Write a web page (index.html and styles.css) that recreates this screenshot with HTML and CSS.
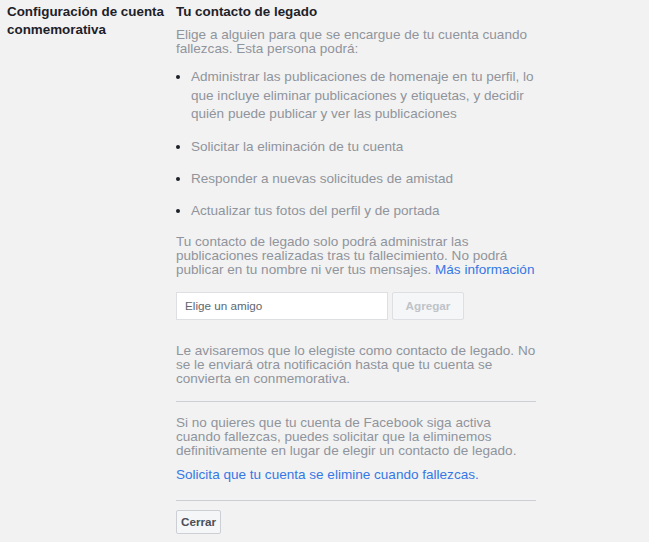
FILE: index.html
```html
<!DOCTYPE html>
<html lang="es">
<head>
    <meta charset="UTF-8">
    <meta name="viewport" content="width=device-width, initial-scale=1.0">
    <title>Configuración de cuenta conmemorativa</title>
    <link rel="stylesheet" href="styles.css">
</head>
<body>
    <div class="settings-row">
        <h2 class="row-label">Configuración de cuenta conmemorativa</h2>

        <div class="row-content">
            <h3 class="section-title">Tu contacto de legado</h3>
            <p class="muted intro">Elige a alguien para que se encargue de tu cuenta cuando fallezcas. Esta persona podrá:</p>

            <ul class="abilities">
                <li><span>Administrar las publicaciones de homenaje en tu perfil, lo que incluye eliminar publicaciones y etiquetas, y decidir quién puede publicar y ver las publicaciones</span></li>
                <li><span>Solicitar la eliminación de tu cuenta</span></li>
                <li><span>Responder a nuevas solicitudes de amistad</span></li>
                <li><span>Actualizar tus fotos del perfil y de portada</span></li>
            </ul>

            <p class="muted limits">Tu contacto de legado solo podrá administrar las publicaciones realizadas tras tu fallecimiento. No podrá publicar en tu nombre ni ver tus mensajes. <a href="#" class="link">Más información</a></p>

            <div class="friend-picker">
                <input type="text" class="friend-input" placeholder="Elige un amigo">
                <button class="btn btn-disabled" disabled>Agregar</button>
            </div>

            <p class="muted notice">Le avisaremos que lo elegiste como contacto de legado. No se le enviará otra notificación hasta que tu cuenta se convierta en conmemorativa.</p>

            <div class="divider"></div>

            <p class="muted delete-info">Si no quieres que tu cuenta de Facebook siga activa cuando fallezcas, puedes solicitar que la eliminemos definitivamente en lugar de elegir un contacto de legado.</p>
            <p class="delete-link"><a href="#" class="link">Solicita que tu cuenta se elimine cuando fallezcas.</a></p>

            <div class="divider"></div>

            <button class="btn btn-close">Cerrar</button>
        </div>
    </div>
</body>
</html>
```

FILE: styles.css
```css
* {
    box-sizing: border-box;
    margin: 0;
    padding: 0;
}

body {
    background: #f2f2f2;
    font-family: "Liberation Sans", Arial, sans-serif;
    font-size: 13.55px;
    color: #1d2129;
}

.settings-row {
    display: flex;
    padding: 3px 0 0 7px;
}

.row-label {
    width: 169px;
    font-size: 13.4px;
    line-height: 18px;
    font-weight: bold;
}

.row-content {
    width: 360px;
}

.section-title {
    font-size: 13.4px;
    line-height: 18px;
    font-weight: bold;
}

.muted {
    color: #90949c;
    line-height: 14px;
}

.intro {
    margin-top: 7px;
}

.abilities {
    margin-top: 12px;
    padding-left: 15px;
    line-height: 18.6px;
}

.abilities li {
    color: #1d2129;
    margin-bottom: 13.8px;
}

.abilities li span {
    color: #90949c;
}

.limits {
    margin-top: 3px;
}

.link {
    color: #3578e5;
    text-decoration: none;
}

.friend-picker {
    display: flex;
    gap: 4px;
    margin-top: 15px;
}

.friend-input {
    width: 212px;
    height: 28px;
    padding: 0 8px;
    background: #fff;
    border: 1px solid #dddfe2;
    font-family: inherit;
    font-size: 11.7px;
    color: #1d2129;
    outline: none;
}

.friend-input::placeholder {
    color: #606770;
}

.btn {
    font-family: inherit;
    font-size: 11.7px;
    font-weight: bold;
    background: #f5f6f7;
    border: 1px solid #ccd0d5;
    border-radius: 2px;
    cursor: pointer;
}

.btn-disabled {
    width: 72px;
    height: 28px;
    color: #bec3c9;
    border-color: #dddfe2;
    cursor: default;
}

.notice {
    margin-top: 24px;
}

.divider {
    height: 1px;
    background: #ccd0d5;
    margin: 15px 0 14px;
}

.delete-link {
    margin-top: 10px;
    line-height: 14px;
}

.delete-link + .divider {
    margin: 18px 0 9px;
}

.btn-close {
    width: 45px;
    height: 24px;
    color: #4b4f56;
}
```
